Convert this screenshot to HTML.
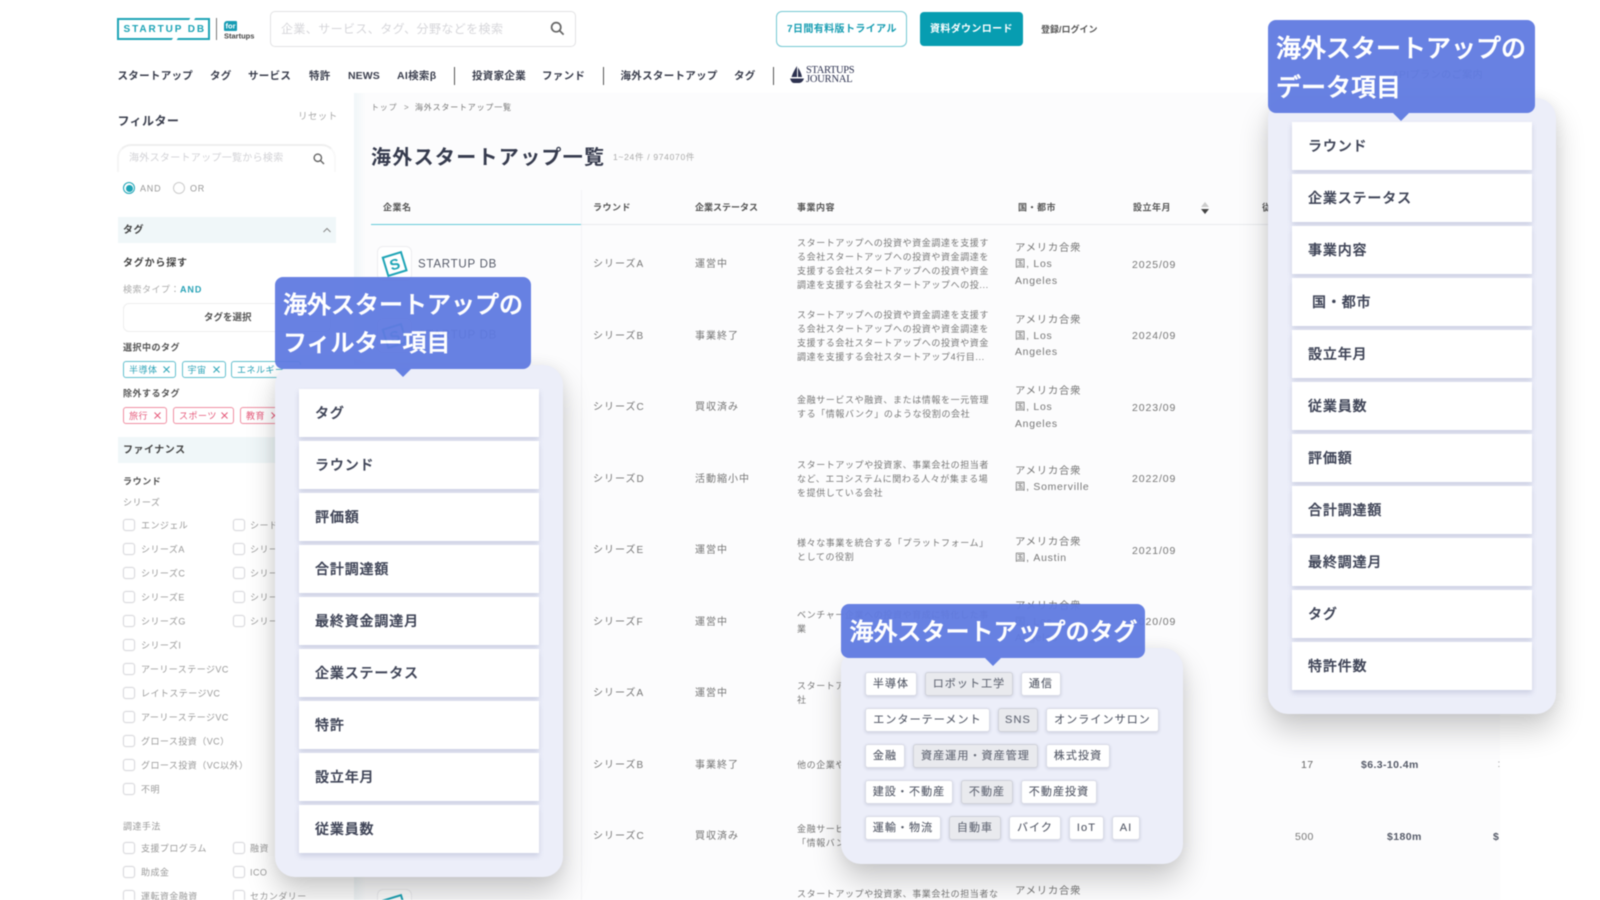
<!DOCTYPE html>
<html lang="ja">
<head>
<meta charset="utf-8">
<title>海外スタートアップ一覧</title>
<style>
html,body{margin:0;padding:0;background:#fff}
#p{position:relative;width:1600px;height:900px;overflow:hidden;background:#fff;font-family:"Liberation Sans","Noto Sans CJK JP",sans-serif;color:#444;filter:blur(.4px)}
.t{position:absolute;white-space:nowrap;line-height:1;transform:translateY(calc(-50% + 1px))}
.b{position:absolute;box-sizing:border-box}
.nav{font-size:10.5px;font-weight:700;letter-spacing:.3px;color:#3b3f4e;top:75px}
.sep{position:absolute;width:1px;height:18px;top:67px;background:#555}
.lab{font-size:9px;letter-spacing:.45px;color:#999}
.hd{font-size:9px;font-weight:700;letter-spacing:.5px;color:#555;top:207px}
.v{font-size:10px;letter-spacing:1px;color:#777}
.d{position:absolute;left:797px;font-size:9px;letter-spacing:.6px;line-height:14.1px;color:#777;white-space:nowrap;transform:translateY(-50%)}
.c{position:absolute;left:1015px;font-size:10.4px;letter-spacing:.75px;line-height:16.3px;color:#777;white-space:nowrap;transform:translateY(calc(-50% + 1.5px))}
.dt{font-size:10.5px;letter-spacing:.9px;color:#777;left:1132px}
.cb{position:absolute;box-sizing:border-box;width:12px;height:12px;border:1px solid #d9d9dd;border-radius:3px;background:#fff;box-shadow:0 0 1px #ddd}
.chip{position:absolute;box-sizing:border-box;height:17px;border-radius:3px;background:#fff;font-size:9px;letter-spacing:.5px;line-height:16px;padding-left:5px;white-space:nowrap}
.chip svg{position:absolute;top:4px;right:5px}
.ct{border:1px solid #62bfce;color:#2aa3b7}
.cp{border:1px solid #f08ea2;color:#e5597a}
.sec{position:absolute;left:118px;width:218px;background:#f0f7f9}
.logo{position:absolute;left:377px;width:35px;height:35px;box-sizing:border-box;border:1px solid #ededf0;border-radius:6px;background:#fff}
.panel{position:absolute;background:#eceef9;border-radius:20px;box-shadow:0 16px 30px rgba(0,0,0,.2),0 0 14px rgba(0,0,0,.06)}
.tip{position:absolute;background:#607be1;opacity:.95;border-radius:8px;color:#fff;font-weight:500;-webkit-text-stroke:.55px #fff;box-sizing:border-box}
.ar{position:absolute;width:16px;height:8px;background:#6580e2;clip-path:polygon(0 0,100% 0,50% 100%)}
.it{position:absolute;width:240px;height:48px;background:#fff;box-shadow:0 3px 5px rgba(90,100,150,.22);font-size:14px;font-weight:500;-webkit-text-stroke:.3px #3f4457;letter-spacing:.85px;line-height:49px;color:#3f4457;box-sizing:border-box;padding-left:16px;white-space:nowrap}
.tg{position:absolute;box-sizing:border-box;height:24px;background:#fff;border:1px solid #d9dbe6;border-radius:3px;box-shadow:0 1px 3px rgba(60,70,110,.18);font-size:11px;letter-spacing:1.1px;line-height:23.5px;color:#555a68;-webkit-text-stroke:.12px #555a68;text-align:center;white-space:nowrap}
.tg.g{background:#e9eaee;border-color:#cfd1d9;color:#666b78}
</style>
</head>
<body>
<div id="p">

<!-- main background -->
<div class="b" style="left:354px;top:93px;width:1146px;height:807px;background:#fcfcfd"></div>
<div class="b" style="left:354px;top:93px;width:12px;height:807px;background:linear-gradient(90deg,#f0f6f8,#fcfcfd)"></div>

<!-- header logo -->
<div class="b" style="left:117px;top:18px;width:93px;height:22px;border:2px solid #1ea4b6"></div>
<div class="b" style="left:190px;top:17px;width:5px;height:3px;background:#fff;transform:skewX(-35deg)"></div>
<div class="b" style="left:172px;top:38px;width:5px;height:3px;background:#fff;transform:skewX(-35deg)"></div>
<div class="t" style="left:123.5px;top:28.5px;font-size:10px;font-weight:700;letter-spacing:1.9px;color:#1ea4b6">STARTUP DB</div>
<div class="b" style="left:216px;top:18px;width:1px;height:22px;background:#777"></div>
<div class="b" style="left:224px;top:21px;width:13px;height:10px;background:#169cb4;border-radius:3px 1px 1px 1px"></div>
<div class="t" style="left:225.5px;top:25px;font-size:7.5px;font-weight:700;color:#fff">for</div>
<div class="t" style="left:224px;top:34.5px;font-size:7.5px;font-weight:700;color:#444">Startups</div>

<!-- header search -->
<div class="b" style="left:270px;top:11px;width:306px;height:36px;border:1px solid #e2e2e4;border-radius:5px;background:#fff"></div>
<div class="t" style="left:281px;top:28px;font-size:12px;letter-spacing:.4px;color:#d6d6da">企業、サービス、タグ、分野などを検索</div>
<svg class="b" style="left:550px;top:21px" width="15" height="15" viewBox="0 0 15 15" fill="none" stroke="#666" stroke-width="1.7"><circle cx="6.2" cy="6.2" r="4.6"/><path d="M9.6 9.6L13.6 13.6"/></svg>

<div class="b" style="left:776px;top:11px;width:131px;height:36px;border:1px solid #74c8d3;border-radius:6px;background:#fff"></div>
<div class="t" style="left:787px;top:28.5px;font-size:10px;font-weight:700;letter-spacing:.4px;color:#179db2">7日間有料版トライアル</div>
<div class="b" style="left:920px;top:12px;width:103px;height:34px;border-radius:4px;background:#079db1"></div>
<div class="t" style="left:930px;top:28.5px;font-size:10px;font-weight:700;letter-spacing:.35px;color:#fff">資料ダウンロード</div>
<div class="t" style="left:1041px;top:28.5px;font-size:9px;font-weight:700;color:#555">登録/ログイン</div>

<!-- nav -->
<div class="t nav" style="left:117.5px">スタートアップ</div>
<div class="t nav" style="left:210px">タグ</div>
<div class="t nav" style="left:248px">サービス</div>
<div class="t nav" style="left:309px">特許</div>
<div class="t nav" style="left:348px;letter-spacing:.1px">NEWS</div>
<div class="t nav" style="left:397px">AI検索β</div>
<div class="sep" style="left:454px"></div>
<div class="t nav" style="left:472px">投資家企業</div>
<div class="t nav" style="left:542px">ファンド</div>
<div class="sep" style="left:603px"></div>
<div class="t nav" style="left:620.5px">海外スタートアップ</div>
<div class="t nav" style="left:734px">タグ</div>
<div class="sep" style="left:773px"></div>
<svg class="b" style="left:790px;top:66px" width="17" height="18" viewBox="0 0 17 18" fill="#2d3250"><path d="M7 0V11H1.5C3 6.5 5 3 7 0Z"/><path d="M8 1.5C10 4.5 11.5 8 12 11H8Z"/><path d="M0 12.5H14C13 15.5 11 17 9 17H4C2 17 1 15 0 12.5Z"/></svg>
<div class="t" style="left:806px;top:69.5px;font-family:'Liberation Serif',serif;font-size:10.5px;letter-spacing:-.35px;color:#2d3250">STARTUPS</div>
<div class="t" style="left:806px;top:79px;font-family:'Liberation Serif',serif;font-size:10.5px;letter-spacing:-.2px;color:#2d3250">JOURNAL</div>
<div class="t" style="left:1392px;top:75px;font-size:10px;letter-spacing:.5px;color:#777">APIプランのご案内</div>

<!-- sidebar -->
<div class="t" style="left:117.5px;top:119.5px;font-size:12px;font-weight:700;letter-spacing:.4px;color:#3b3f4e">フィルター</div>
<div class="t" style="left:298px;top:116px;font-size:9.5px;letter-spacing:.4px;color:#aaa">リセット</div>
<div class="b" style="left:117px;top:144px;width:219px;height:28px;border-radius:14px 14px 0 0;border-top:2px solid #efefef;border-left:2px solid #f5f5f5;border-right:2px solid #f9f9f9"></div>
<div class="t" style="left:129px;top:158px;font-size:10px;letter-spacing:.3px;color:#d2d2d6">海外スタートアップ一覧から検索</div>
<svg class="b" style="left:313px;top:153px" width="12" height="12" viewBox="0 0 12 12" fill="none" stroke="#666" stroke-width="1.4"><circle cx="4.8" cy="4.8" r="3.7"/><path d="M7.6 7.6L11 11"/></svg>
<div class="b" style="left:123px;top:182px;width:12px;height:12px;border:1px solid #1ea4b6;border-radius:50%"></div>
<div class="b" style="left:125.5px;top:184.5px;width:7px;height:7px;background:#1ea4b6;border-radius:50%"></div>
<div class="t" style="left:140px;top:188px;font-size:9px;letter-spacing:.8px;color:#999">AND</div>
<div class="b" style="left:173px;top:182px;width:12px;height:12px;border:1px solid #ccc;border-radius:50%"></div>
<div class="t" style="left:190px;top:188px;font-size:9px;letter-spacing:.8px;color:#999">OR</div>

<div class="sec" style="top:217px;height:26px"></div>
<div class="t" style="left:123px;top:229.5px;font-size:10px;font-weight:700;letter-spacing:.5px;color:#444">タグ</div>
<svg class="b" style="left:323px;top:227px" width="8" height="6" viewBox="0 0 8 6" fill="none" stroke="#888" stroke-width="1"><path d="M.5 5L4 1.5L7.5 5"/></svg>
<div class="t" style="left:123px;top:262.5px;font-size:10px;font-weight:700;letter-spacing:.8px;color:#444">タグから探す</div>
<div class="t" style="left:123px;top:289px;font-size:9px;letter-spacing:.5px;color:#aaa">検索タイプ：<span style="color:#2aa3b7;font-weight:700;letter-spacing:.9px">AND</span></div>
<div class="b" style="left:123px;top:303px;width:208px;height:29px;border:1px solid #eee;border-radius:6px;background:#fff"></div>
<div class="t" style="left:204px;top:317px;font-size:9.5px;font-weight:700;color:#555">タグを選択</div>
<div class="t" style="left:123px;top:347px;font-size:9px;font-weight:700;letter-spacing:.5px;color:#555">選択中のタグ</div>
<div class="chip ct" style="left:123px;top:361px;width:53px">半導体<svg width="7" height="7" viewBox="0 0 7 7" stroke="#2aa3b7" fill="none"><path d="M.5.5L6.5 6.5M6.5.5L.5 6.5"/></svg></div>
<div class="chip ct" style="left:181.5px;top:361px;width:44px">宇宙<svg width="7" height="7" viewBox="0 0 7 7" stroke="#2aa3b7" fill="none"><path d="M.5.5L6.5 6.5M6.5.5L.5 6.5"/></svg></div>
<div class="chip ct" style="left:231px;top:361px;width:70px">エネルギー</div>
<div class="t" style="left:123px;top:393px;font-size:9px;font-weight:700;letter-spacing:.5px;color:#555">除外するタグ</div>
<div class="chip cp" style="left:123px;top:407px;width:44px">旅行<svg width="7" height="7" viewBox="0 0 7 7" stroke="#e5597a" fill="none"><path d="M.5.5L6.5 6.5M6.5.5L.5 6.5"/></svg></div>
<div class="chip cp" style="left:173px;top:407px;width:61px">スポーツ<svg width="7" height="7" viewBox="0 0 7 7" stroke="#e5597a" fill="none"><path d="M.5.5L6.5 6.5M6.5.5L.5 6.5"/></svg></div>
<div class="chip cp" style="left:240px;top:407px;width:44px">教育<svg width="7" height="7" viewBox="0 0 7 7" stroke="#e5597a" fill="none"><path d="M.5.5L6.5 6.5M6.5.5L.5 6.5"/></svg></div>
<div class="sec" style="top:437px;height:26px"></div>
<div class="t" style="left:123px;top:449.5px;font-size:10px;font-weight:700;letter-spacing:.5px;color:#444">ファイナンス</div>
<div class="t" style="left:123px;top:480.5px;font-size:9px;font-weight:700;letter-spacing:.6px;color:#555">ラウンド</div>
<div class="t lab" style="left:123px;top:501.5px">シリーズ</div>

<div class="cb" style="left:123px;top:519px"></div><div class="t lab" style="left:141px;top:524.5px">エンジェル</div>
<div class="cb" style="left:233px;top:519px"></div><div class="t lab" style="left:250px;top:524.5px">シード</div>
<div class="cb" style="left:123px;top:543px"></div><div class="t lab" style="left:141px;top:548.5px">シリーズA</div>
<div class="cb" style="left:233px;top:543px"></div><div class="t lab" style="left:250px;top:548.5px">シリーズB</div>
<div class="cb" style="left:123px;top:567px"></div><div class="t lab" style="left:141px;top:572.5px">シリーズC</div>
<div class="cb" style="left:233px;top:567px"></div><div class="t lab" style="left:250px;top:572.5px">シリーズD</div>
<div class="cb" style="left:123px;top:591px"></div><div class="t lab" style="left:141px;top:596.5px">シリーズE</div>
<div class="cb" style="left:233px;top:591px"></div><div class="t lab" style="left:250px;top:596.5px">シリーズF</div>
<div class="cb" style="left:123px;top:615px"></div><div class="t lab" style="left:141px;top:620.5px">シリーズG</div>
<div class="cb" style="left:233px;top:615px"></div><div class="t lab" style="left:250px;top:620.5px">シリーズH</div>
<div class="cb" style="left:123px;top:639px"></div><div class="t lab" style="left:141px;top:644.5px">シリーズI</div>
<div class="cb" style="left:123px;top:663px"></div><div class="t lab" style="left:141px;top:668.5px">アーリーステージVC</div>
<div class="cb" style="left:123px;top:687px"></div><div class="t lab" style="left:141px;top:692.5px">レイトステージVC</div>
<div class="cb" style="left:123px;top:711px"></div><div class="t lab" style="left:141px;top:716.5px">アーリーステージVC</div>
<div class="cb" style="left:123px;top:735px"></div><div class="t lab" style="left:141px;top:740.5px">グロース投資（VC）</div>
<div class="cb" style="left:123px;top:759px"></div><div class="t lab" style="left:141px;top:764.5px">グロース投資（VC以外）</div>
<div class="cb" style="left:123px;top:783px"></div><div class="t lab" style="left:141px;top:788.5px">不明</div>
<div class="t lab" style="left:123px;top:825.5px">調達手法</div>
<div class="cb" style="left:123px;top:842px"></div><div class="t lab" style="left:141px;top:847.5px">支援プログラム</div>
<div class="cb" style="left:233px;top:842px"></div><div class="t lab" style="left:250px;top:847.5px">融資</div>
<div class="cb" style="left:123px;top:866px"></div><div class="t lab" style="left:141px;top:871.5px">助成金</div>
<div class="cb" style="left:233px;top:866px"></div><div class="t lab" style="left:250px;top:871.5px">ICO</div>
<div class="cb" style="left:123px;top:890px"></div><div class="t lab" style="left:141px;top:895.5px">運転資金融資</div>
<div class="cb" style="left:233px;top:890px"></div><div class="t lab" style="left:250px;top:895.5px">セカンダリー</div>

<!-- main content -->
<div class="t" style="left:371px;top:106.5px;font-size:8px;letter-spacing:.8px;color:#888">トップ</div>
<div class="t" style="left:404px;top:106.5px;font-size:8px;color:#888">&gt;</div>
<div class="t" style="left:415px;top:106.5px;font-size:8px;letter-spacing:.8px;color:#777">海外スタートアップ一覧</div>
<div class="t" style="left:371px;top:156.5px;font-size:20px;font-weight:700;letter-spacing:1.3px;color:#363b4e">海外スタートアップ一覧</div>
<div class="t" style="left:613px;top:155.5px;font-size:8.5px;letter-spacing:.7px;color:#aaa">1~24件 / 974070件</div>

<div class="b" style="left:581px;top:190px;width:1px;height:710px;background:#f4f4f6"></div>
<div class="b" style="left:581px;top:224px;width:919px;height:1px;background:#e9ebee"></div>
<div class="b" style="left:371px;top:224px;width:210px;height:1px;background:#66cbd9"></div>

<div class="t hd" style="left:383px">企業名</div>
<div class="t hd" style="left:593px">ラウンド</div>
<div class="t hd" style="left:695px;letter-spacing:0">企業ステータス</div>
<div class="t hd" style="left:797px">事業内容</div>
<div class="t hd" style="left:1018px">国・都市</div>
<div class="t hd" style="left:1133px">設立年月</div>
<svg class="b" style="left:1201px;top:202px" width="8" height="12" viewBox="0 0 8 12"><path d="M4 0L8 5H0Z" fill="#ccc"/><path d="M4 12L0 7H8Z" fill="#444"/></svg>
<div class="t hd" style="left:1262px">従業員数</div>

<!-- row 1 -->
<div class="logo" style="top:246px"><svg width="33" height="33" viewBox="0 0 33 33"><g transform="rotate(-17 16.5 16.5)"><rect x="7" y="7.5" width="19" height="19" fill="#fff" stroke="#1ea4b6" stroke-width="2"/><text x="16.5" y="22.5" font-size="15" font-weight="700" text-anchor="middle" fill="#1ea4b6" font-family="Liberation Sans,sans-serif">S</text></g></svg></div>
<div class="t" style="left:418px;top:263.5px;font-size:11.5px;letter-spacing:.75px;color:#555a68">STARTUP DB</div>
<div class="t v" style="left:593px;top:264px">シリーズA</div>
<div class="t v" style="left:695px;top:264px">運営中</div>
<div class="d" style="top:264px">スタートアップへの投資や資金調達を支援す<br>る会社スタートアップへの投資や資金調達を<br>支援する会社スタートアップへの投資や資金<br>調達を支援する会社スタートアップへの投...</div>
<div class="c" style="top:264px">アメリカ合衆<br>国, Los<br>Angeles</div>
<div class="t dt" style="top:263.5px">2025/09</div>
<!-- row 2 -->
<div class="logo" style="top:318px"><svg width="33" height="33" viewBox="0 0 33 33"><g transform="rotate(-17 16.5 16.5)"><rect x="7" y="7.5" width="19" height="19" fill="#fff" stroke="#1ea4b6" stroke-width="2"/><text x="16.5" y="22.5" font-size="15" font-weight="700" text-anchor="middle" fill="#1ea4b6" font-family="Liberation Sans,sans-serif">S</text></g></svg></div>
<div class="t" style="left:418px;top:335px;font-size:11.5px;letter-spacing:.75px;color:#555a68">STARTUP DB</div>
<div class="t v" style="left:593px;top:335.5px">シリーズB</div>
<div class="t v" style="left:695px;top:335.5px">事業終了</div>
<div class="d" style="top:335.5px">スタートアップへの投資や資金調達を支援す<br>る会社スタートアップへの投資や資金調達を<br>支援する会社スタートアップへの投資や資金<br>調達を支援する会社スタートアップ4行目...</div>
<div class="c" style="top:335.5px">アメリカ合衆<br>国, Los<br>Angeles</div>
<div class="t dt" style="top:335px">2024/09</div>
<!-- row 3 -->
<div class="t v" style="left:593px;top:407px">シリーズC</div>
<div class="t v" style="left:695px;top:407px">買収済み</div>
<div class="d" style="top:407px">金融サービスや融資、または情報を一元管理<br>する「情報バンク」のような役割の会社</div>
<div class="c" style="top:407px">アメリカ合衆<br>国, Los<br>Angeles</div>
<div class="t dt" style="top:406.5px">2023/09</div>
<!-- row 4 -->
<div class="t v" style="left:593px;top:478.5px">シリーズD</div>
<div class="t v" style="left:695px;top:478.5px">活動縮小中</div>
<div class="d" style="top:478.5px">スタートアップや投資家、事業会社の担当者<br>など、エコシステムに関わる人々が集まる場<br>を提供している会社</div>
<div class="c" style="top:478.5px">アメリカ合衆<br>国, Somerville</div>
<div class="t dt" style="top:478px">2022/09</div>
<!-- row 5 -->
<div class="t v" style="left:593px;top:550px">シリーズE</div>
<div class="t v" style="left:695px;top:550px">運営中</div>
<div class="d" style="top:550px">様々な事業を統合する「プラットフォーム」<br>としての役割</div>
<div class="c" style="top:550px">アメリカ合衆<br>国, Austin</div>
<div class="t dt" style="top:549.5px">2021/09</div>
<!-- row 6 -->
<div class="t v" style="left:593px;top:621.5px">シリーズF</div>
<div class="t v" style="left:695px;top:621.5px">運営中</div>
<div class="d" style="top:621.5px">ベンチャー企業への投資や育成に特化した事<br>業</div>
<div class="c" style="top:621.5px">アメリカ合衆<br>国, Los<br>Angeles</div>
<div class="t dt" style="top:621px">2020/09</div>
<!-- row 7 -->
<div class="t v" style="left:593px;top:693px">シリーズA</div>
<div class="t v" style="left:695px;top:693px">運営中</div>
<div class="d" style="top:693px">スタートアップの成長を支援する投資会社の<br>社</div>
<!-- row 8 -->
<div class="t v" style="left:593px;top:764.5px">シリーズB</div>
<div class="t v" style="left:695px;top:764.5px">事業終了</div>
<div class="d" style="top:764.5px">他の企業や事業者向けのサービスを提供する</div>
<div class="t" style="left:1301px;top:764px;font-size:10.5px;letter-spacing:.4px;color:#666">17</div>
<div class="t" style="left:1361px;top:764px;font-size:10.5px;font-weight:700;letter-spacing:.4px;color:#555a68">$6.3-10.4m</div>
<div class="t" style="left:1497.5px;top:764px;font-size:10px;color:#999">:</div>
<!-- row 9 -->
<div class="t v" style="left:593px;top:836px">シリーズC</div>
<div class="t v" style="left:695px;top:836px">買収済み</div>
<div class="d" style="top:836px">金融サービスや融資、または情報を一元管理<br>「情報バンク」のような役割の会社</div>
<div class="t" style="left:1295px;top:835.5px;font-size:10.5px;letter-spacing:.4px;color:#777">500</div>
<div class="t" style="left:1387px;top:835.5px;font-size:10.5px;font-weight:700;letter-spacing:.4px;color:#555a68">$180m</div>
<div class="t" style="left:1493px;top:835.5px;font-size:10.5px;font-weight:700;color:#555a68">$</div>
<!-- row 10 -->
<div class="logo" style="top:889px"><svg width="33" height="33" viewBox="0 0 33 33"><g transform="rotate(-17 16.5 16.5)"><rect x="7" y="7.5" width="19" height="19" fill="#fff" stroke="#1ea4b6" stroke-width="2"/></g></svg></div>
<div class="d" style="top:908px">スタートアップや投資家、事業会社の担当者な<br>ど、エコシステムに関わる人々が集まる場を<br>提供している会社</div>
<div class="c" style="top:907px">アメリカ合衆<br>国, Los<br>Angeles</div>
<!-- right clip -->
<div class="b" style="left:1500px;top:93px;width:100px;height:807px;background:#fff"></div>

<!-- filter panel -->
<div class="panel" style="left:275px;top:365px;width:288px;height:512px"></div>
<div class="it" style="left:299px;top:389px">タグ</div>
<div class="it" style="left:299px;top:441px">ラウンド</div>
<div class="it" style="left:299px;top:493px">評価額</div>
<div class="it" style="left:299px;top:545px">合計調達額</div>
<div class="it" style="left:299px;top:597px">最終資金調達月</div>
<div class="it" style="left:299px;top:649px">企業ステータス</div>
<div class="it" style="left:299px;top:701px">特許</div>
<div class="it" style="left:299px;top:753px">設立年月</div>
<div class="it" style="left:299px;top:805px">従業員数</div>
<div class="tip" style="left:275px;top:277px;width:256px;height:92px;padding:10px 0 0 8px;font-size:24px;line-height:38.4px;white-space:nowrap">海外スタートアップの<br>フィルター項目</div>
<div class="ar" style="left:395px;top:369px"></div>

<!-- right panel -->
<div class="panel" style="left:1268px;top:98px;width:288px;height:616px"></div>
<div class="it" style="left:1292px;top:122px">ラウンド</div>
<div class="it" style="left:1292px;top:174px">企業ステータス</div>
<div class="it" style="left:1292px;top:226px">事業内容</div>
<div class="it" style="left:1292px;top:278px;padding-left:20px">国・都市</div>
<div class="it" style="left:1292px;top:330px">設立年月</div>
<div class="it" style="left:1292px;top:382px">従業員数</div>
<div class="it" style="left:1292px;top:434px">評価額</div>
<div class="it" style="left:1292px;top:486px">合計調達額</div>
<div class="it" style="left:1292px;top:538px">最終調達月</div>
<div class="it" style="left:1292px;top:590px">タグ</div>
<div class="it" style="left:1292px;top:642px">特許件数</div>
<div class="tip" style="left:1268px;top:20px;width:267px;height:93px;padding:10px 0 0 8px;font-size:25px;line-height:38.5px;white-space:nowrap">海外スタートアップの<br>データ項目</div>
<div class="ar" style="left:1393px;top:113px"></div>

<!-- tag panel -->
<div class="panel" style="left:841px;top:648px;width:342px;height:216px"></div>
<div class="tg" style="left:865px;top:672px;width:52px">半導体</div>
<div class="tg g" style="left:925px;top:672px;width:88px">ロボット工学</div>
<div class="tg" style="left:1021px;top:672px;width:40px">通信</div>
<div class="tg" style="left:865px;top:708px;width:125px">エンターテーメント</div>
<div class="tg g" style="left:998px;top:708px;width:40px">SNS</div>
<div class="tg" style="left:1046px;top:708px;width:113px">オンラインサロン</div>
<div class="tg" style="left:865px;top:744px;width:40px">金融</div>
<div class="tg g" style="left:913px;top:744px;width:125px">資産運用・資産管理</div>
<div class="tg" style="left:1046px;top:744px;width:64px">株式投資</div>
<div class="tg" style="left:865px;top:780px;width:88px">建設・不動産</div>
<div class="tg g" style="left:961px;top:780px;width:52px">不動産</div>
<div class="tg" style="left:1021px;top:780px;width:76px">不動産投資</div>
<div class="tg" style="left:865px;top:816px;width:76px">運輸・物流</div>
<div class="tg g" style="left:949px;top:816px;width:52px">自動車</div>
<div class="tg" style="left:1009px;top:816px;width:52px">バイク</div>
<div class="tg" style="left:1069px;top:816px;width:35px">IoT</div>
<div class="tg" style="left:1112px;top:816px;width:28px">AI</div>
<div class="tip" style="left:841px;top:604px;width:304px;height:54px;padding:10px 0 0 8.5px;font-size:24px;line-height:38px;white-space:nowrap">海外スタートアップのタグ</div>
<div class="ar" style="left:985px;top:658px"></div>

</div>
</body>
</html>
